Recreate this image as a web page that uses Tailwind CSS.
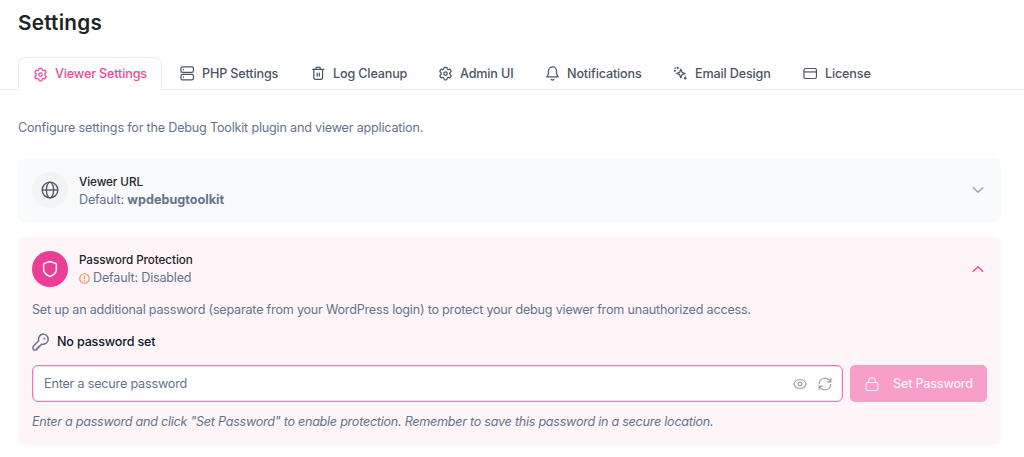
<!DOCTYPE html>
<html lang="en">
<head>
    <meta charset="UTF-8">
    <meta name="viewport" content="width=device-width, initial-scale=1.0">
    <title>Settings</title>
    <script src="https://cdn.jsdelivr.net/npm/@tailwindcss/browser@4"></script>
</head>
<body class="h-[457px] overflow-hidden bg-white font-['Inter',sans-serif] text-[12.6px] leading-[18px] tracking-[-0.19px] text-[#64748b]">
    <!-- Icons -->
    <svg class="hidden">
        <symbol id="gear" viewBox="0 0 24 24">
            <path d="M9.594 2.94c.09-.542.56-.94 1.11-.94h2.593c.55 0 1.02.398 1.11.94l.213 1.481c.063.374.313.686.645.87l.44.254c.325.196.72.257 1.075.124l1.417-.556a1.125 1.125 0 0 1 1.37.49l1.296 2.247a1.125 1.125 0 0 1-.26 1.431l-1.203.927c-.293.241-.438.613-.43.992v1.6c-.008.378.137.75.43.991l1.204.927c.424.35.534.955.26 1.43l-1.298 2.247a1.125 1.125 0 0 1-1.369.491l-1.417-.556c-.355-.133-.75-.072-1.076.124l-.44.256c-.331.183-.581.495-.644.869l-.213 1.481c-.09.543-.56.94-1.11.94h-2.594c-.55 0-1.019-.398-1.11-.94l-.213-1.481c-.062-.374-.312-.686-.644-.87l-.44-.254c-.325-.196-.72-.257-1.076-.124l-1.417.556a1.125 1.125 0 0 1-1.369-.49l-1.297-2.247a1.125 1.125 0 0 1 .26-1.431l1.204-.927c.292-.24.437-.613.43-.991v-1.600c.007-.38-.138-.751-.43-.992l-1.204-.927a1.125 1.125 0 0 1-.26-1.43l1.297-2.247a1.125 1.125 0 0 1 1.37-.491l1.416.556c.356.133.751.072 1.076-.124l.44-.256c.332-.183.582-.495.644-.869z"/>
            <circle cx="12" cy="12" r="2.800"/>
        </symbol>
    </svg>

    <!-- Header -->
    <h1 class="pl-[18px] pt-[9px] text-[20.7px] leading-[28px] font-semibold tracking-[0.25px] text-[#1d2327]">Settings</h1>

    <!-- Tabs -->
    <nav class="mt-[20px] flex h-[33px] border-b border-[#e9eef4] pl-[18px] font-medium tracking-[-0.15px] text-[#4b5563]">
        <a class="-mb-px flex h-[33px] w-[144px] items-center gap-[7px] rounded-t-[7px] border border-b-0 border-[#e9eef4] bg-white pl-[14px] text-[#ec4899]">
            <svg class="size-[15px]" fill="none" stroke="currentColor" stroke-width="2"><use href="#gear"/></svg>
            <span>Viewer Settings</span>
        </a>
        <a class="ml-[18px] flex w-[131px] items-center gap-[7px] pt-px">
            <svg class="size-[15px]" viewBox="0 0 24 24" fill="none" stroke="currentColor" stroke-width="2" stroke-linecap="round"><rect x="1.500" y="1.500" width="20" height="8.500" rx="2.500"/><rect x="1.500" y="13.500" width="20" height="8.500" rx="2.500"/><path d="M5.500 5.500v.5M5.500 17.500v.5"/></svg>
            <span>PHP Settings</span>
        </a>
        <a class="flex w-[127px] items-center gap-[7px] pt-px">
            <svg class="size-[15px]" viewBox="0 0 24 24" fill="none" stroke="currentColor" stroke-width="2" stroke-linecap="round" stroke-linejoin="round"><path d="M2.500 5.500h18M4.500 5.500v13a3 3 0 0 0 3 3h8a3 3 0 0 0 3-3v-13M7.500 5.500l.8-2.200A2 2 0 0 1 10.200 2h2.600a2 2 0 0 1 1.900 1.300l.8 2.200M9.800 11.500v4.500M13.300 11.500v4.500"/></svg>
            <span>Log Cleanup</span>
        </a>
        <a class="flex w-[107px] items-center gap-[7px] pt-px">
            <svg class="size-[15px]" fill="none" stroke="currentColor" stroke-width="2"><use href="#gear"/></svg>
            <span>Admin UI</span>
        </a>
        <a class="flex w-[128px] items-center gap-[7px] pt-px">
            <svg class="size-[15px]" viewBox="0 0 24 24" fill="none" stroke="currentColor" stroke-width="2" stroke-linecap="round" stroke-linejoin="round"><path d="M12 1.500a6.500 6.500 0 0 0-6.500 6.500v4.500L3 17.500h18l-2.500-5V8A6.500 6.500 0 0 0 12 1.500zM10 21.500a3 3 0 0 0 4 0"/></svg>
            <span>Notifications</span>
        </a>
        <a class="flex w-[130px] items-center gap-[7px] pt-px">
            <svg class="size-[15px]" viewBox="0 0 24 24" fill="none" stroke="currentColor" stroke-width="2" stroke-linejoin="round"><path d="M12.500 5l1.900 5.100 5.100 1.900-5.100 1.900-1.900 5.100-1.900-5.100L5.500 12l5.100-1.900z"/><g fill="currentColor" stroke="none"><circle cx="7.500" cy="3" r="1.700"/><circle cx="3" cy="7.500" r="1.700"/><circle cx="3.300" cy="3.300" r="1.300"/><circle cx="19.500" cy="19.500" r="2"/><circle cx="19.500" cy="16" r="1"/></g></svg>
            <span>Email Design</span>
        </a>
        <a class="flex items-center gap-[7px] pt-px">
            <svg class="size-[15px]" viewBox="0 0 24 24" fill="none" stroke="currentColor" stroke-width="1.900"><rect x="1.500" y="4" width="20" height="16" rx="2.500"/><path d="M1.500 9.500h20"/></svg>
            <span>License</span>
        </a>
    </nav>

    <main class="px-[18px] pt-[29px]">
        <p>Configure settings for the Debug Toolkit plugin and viewer application.</p>

        <!-- Viewer URL -->
        <section class="mt-[21px] flex h-[64px] w-[983px] items-center rounded-[7px] bg-[#f8fafc] pl-[14px] pr-[16px]">
            <div class="flex size-[36px] items-center justify-center rounded-full bg-[#f3f4f6] text-[#4b5563]">
                <svg class="size-[18px]" viewBox="0 0 24 24" fill="none" stroke="currentColor" stroke-width="1.800"><circle cx="12" cy="12" r="10.500"/><ellipse cx="12" cy="12" rx="4.800" ry="10.500"/><path d="M1.500 12h21"/></svg>
            </div>
            <div class="ml-[11px] flex-1 pt-[2px]">
                <h2 class="text-[11.7px] leading-[17px] font-medium tracking-[-0.08px] text-[#1d2327]">Viewer URL</h2>
                <p>Default: <strong class="font-bold tracking-[0.03px]">wpdebugtoolkit</strong></p>
            </div>
            <svg class="size-[14px] text-[#9ca3af]" viewBox="0 0 14 14" fill="none" stroke="currentColor" stroke-width="1.500" stroke-linecap="round" stroke-linejoin="round"><path d="M2.300 4.700 7 9.300l4.700-4.600"/></svg>
        </section>

        <!-- Password Protection -->
        <section class="mt-[15px] h-[208px] w-[983px] rounded-[7px] bg-[#fff5f9] px-[14px]">
            <div class="flex h-[64px] items-center pr-[2px]">
                <div class="flex size-[36px] items-center justify-center rounded-full bg-[#eb3f96] text-white">
                    <svg class="size-[18px]" viewBox="0 0 24 24" fill="none" stroke="currentColor" stroke-width="1.900" stroke-linejoin="round"><path d="M12 2 19.500 4.500Q20.500 5 20.500 6v6.500c0 5-4.500 7.700-8.500 9.500-4-1.800-8.500-4.500-8.500-9.500V6q0-1 1-1.500z"/></svg>
                </div>
                <div class="ml-[11px] flex-1 pt-px">
                    <h2 class="text-[11.7px] leading-[17px] font-medium tracking-[-0.08px] text-[#1d2327]">Password Protection</h2>
                    <p class="flex items-center gap-[3px]">
                        <svg class="size-[11px] text-[#f59443]" viewBox="0 0 12 12" fill="none" stroke="currentColor" stroke-width="1.300" stroke-linecap="round"><circle cx="6" cy="6" r="5.200"/><path d="M6 3.300v3M6 8.400v.1"/></svg>
                        <span>Default: Disabled</span>
                    </p>
                </div>
                <svg class="size-[14px] text-[#ec4899]" viewBox="0 0 14 14" fill="none" stroke="currentColor" stroke-width="1.500" stroke-linecap="round" stroke-linejoin="round"><path d="M2.300 9.300 7 4.700l4.700 4.600"/></svg>
            </div>
            <p class="tracking-[-0.21px]">Set up an additional password (separate from your WordPress login) to protect your debug viewer from unauthorized access.</p>
            <div class="mt-[14px] flex items-center gap-[7px]">
                <svg class="size-[18px]" viewBox="0 0 24 24" fill="none" stroke="currentColor" stroke-width="2" stroke-linecap="round" stroke-linejoin="round"><path d="M15.500 1.500a6.800 6.800 0 0 0-6.600 8.900L2.300 17a2.500 2.500 0 0 0-.8 1.800V21A1.500 1.500 0 0 0 3 22.500h2.500a1 1 0 0 0 1-1V20H8a1 1 0 0 0 1-1v-1.500h1.300l3-2.600A6.800 6.800 0 1 0 15.500 1.500z"/><circle cx="16.500" cy="7.500" r="1.300" fill="currentColor" stroke="none"/></svg>
                <span class="font-medium text-[#0f172a]">No password set</span>
            </div>
            <div class="mt-[14px] flex h-[37px] gap-[7px]">
                <div class="flex h-[37px] w-[811px] items-center rounded-[6px] border border-[#f472b6] bg-white pl-[11px] pr-[10px] ring-1 ring-[#f472b6]/25 ring-inset">
                    <span class="flex-1">Enter a secure password</span>
                    <svg class="size-[14px] text-[#9ca3af]" viewBox="0 0 14 14" fill="none" stroke="currentColor" stroke-width="1.200"><path d="M.7 7C2 4 4.400 2.500 7 2.500S12 4 13.300 7C12 10 9.600 11.500 7 11.500S2 10 .7 7z"/><circle cx="7" cy="7" r="1.900"/></svg>
                    <svg class="ml-[11px] size-[14px] text-[#9ca3af]" viewBox="0 0 24 24" fill="none" stroke="currentColor" stroke-width="2.100" stroke-linecap="round" stroke-linejoin="round"><path d="M22 2.500v6h-6M2 21.500v-6h6M2 11.500A10 10 0 0 1 19.500 5.500L22 8.500M22 12.500a10 10 0 0 1-17.500 6L2 15.500"/></svg>
                </div>
                <button class="flex h-[37px] w-[137px] items-center rounded-[5px] bg-[#f79fc8] pl-[15px] font-medium text-[#fff0f7]">
                    <svg class="size-[14px]" viewBox="0 0 14 14" fill="none" stroke="currentColor" stroke-width="1.100"><rect x="1.200" y="5.500" width="11.600" height="8" rx="1.500"/><path d="M3.700 5.500V4a3.300 3.300 0 0 1 6.600 0v1.500"/></svg>
                    <span class="ml-[14px]">Set Password</span>
                </button>
            </div>
            <p class="mt-[11px] tracking-[-0.26px] italic">Enter a password and click "Set Password" to enable protection. Remember to save this password in a secure location.</p>
        </section>
    </main>
</body>
</html>
